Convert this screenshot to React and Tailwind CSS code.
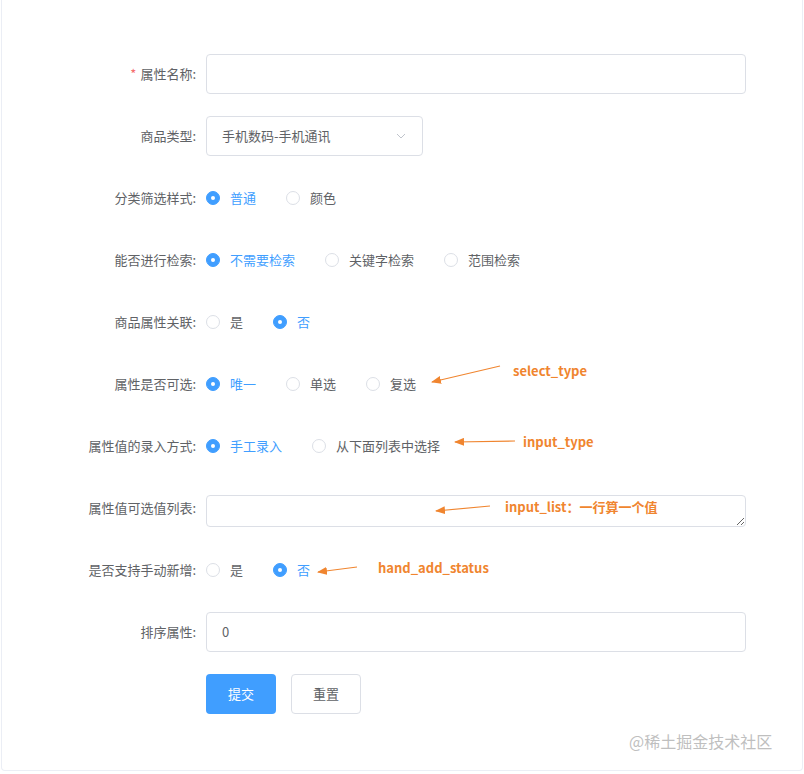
const Radio = ({ label, checked, className = "" }) => (
  <label className={`flex items-center mr-[30px] ${className}`}>
    <span
      className={`w-[14px] h-[14px] rounded-full flex items-center justify-center border ${
        checked ? "bg-[#409eff] border-[#409eff]" : "bg-white border-[#dcdfe6]"
      }`}
    >
      {checked && <span className="w-[4px] h-[4px] rounded-full bg-white" />}
    </span>
    <span className={`ml-[10px] text-[13px] ${checked ? "text-[#409eff]" : "text-[#606266]"}`}>{label}</span>
  </label>
);

const Row = ({ label, required, children }) => (
  <div className="flex h-10 mb-[22px] items-center">
    <div className="w-[204px] pr-[10px] text-right text-[13px] text-[#606266] shrink-0">
      {required && <span className="text-[#f56c6c] mr-[4px]">*</span>}
      {label}
    </div>
    <div className="flex items-center flex-1 pr-[56px]">{children}</div>
  </div>
);

const Radios = ({ items, checked }) => (
  <div className="flex items-center">
    {items.map((t, i) => (
      <Radio key={t} label={t} checked={i === checked} />
    ))}
  </div>
);

export default function App() {
  return (
    <div
      className="relative w-[804px] h-[774px] bg-white"
      style={{ fontFamily: '"Noto Sans CJK SC", "Liberation Sans", sans-serif' }}
    >
      <div className="mx-[1px] h-[771px] border border-t-0 border-[#ebeef5] rounded-b pt-[54px]">
        <Row label="属性名称:" required>
          <div className="w-full h-10 border border-[#dcdfe6] rounded" />
        </Row>
        <Row label="商品类型:">
          <div className="w-[217px] h-10 border border-[#dcdfe6] rounded flex items-center justify-between px-[15px] text-[13px] text-[#606266]">
            <span>手机数码-手机通讯</span>
            <svg width="12" height="12" viewBox="0 0 12 12" fill="none" stroke="#c0c4cc" strokeWidth="1">
              <path d="M2 4l4 4 4-4" />
            </svg>
          </div>
        </Row>
        <Row label="分类筛选样式:">
          <Radios items={["普通", "颜色"]} checked={0} />
        </Row>
        <Row label="能否进行检索:">
          <Radios items={["不需要检索", "关键字检索", "范围检索"]} checked={0} />
        </Row>
        <Row label="商品属性关联:">
          <Radios items={["是", "否"]} checked={1} />
        </Row>
        <Row label="属性是否可选:">
          <Radios items={["唯一", "单选", "复选"]} checked={0} />
        </Row>
        <Row label="属性值的录入方式:">
          <Radios items={["手工录入", "从下面列表中选择"]} checked={0} />
        </Row>
        <Row label="属性值可选值列表:">
          <textarea className="w-full h-[32px] mt-[6px] border border-[#dcdfe6] rounded resize-y outline-none" />
        </Row>
        <Row label="是否支持手动新增:">
          <Radios items={["是", "否"]} checked={1} />
        </Row>
        <Row label="排序属性:">
          <div className="w-full h-10 border border-[#dcdfe6] rounded flex items-center px-[15px] text-[13px] text-[#606266]">
            0
          </div>
        </Row>
        <Row label="">
          <button className="w-[70px] h-10 rounded bg-[#409eff] text-white text-[13px]">提交</button>
          <button className="w-[70px] h-10 ml-[15px] rounded border border-[#dcdfe6] text-[#606266] text-[13px] bg-white">
            重置
          </button>
        </Row>
      </div>

      <svg className="absolute left-0 top-0" width="804" height="774">
        <defs>
          <marker id="ah" markerWidth="10" markerHeight="8" refX="9" refY="4" orient="auto" markerUnits="userSpaceOnUse">
            <path d="M0 0L10 4L0 8z" fill="#f0852f" />
          </marker>
        </defs>
        <g stroke="#f0852f" strokeWidth="1.2" markerEnd="url(#ah)">
          <line x1="500" y1="366" x2="432" y2="382" />
          <line x1="515" y1="441" x2="455" y2="442" />
          <line x1="490" y1="506" x2="436" y2="511" />
          <line x1="357" y1="567" x2="318" y2="572" />
        </g>
      </svg>
      <div className="absolute left-[513px] top-[361px] text-[13px] font-bold text-[#f0852f]">select_type</div>
      <div className="absolute left-[523px] top-[432px] text-[13px] font-bold text-[#f0852f]">input_type</div>
      <div className="absolute left-[505px] top-[497px] text-[13px] font-bold text-[#f0852f]">input_list：一行算一个值</div>
      <div className="absolute left-[378px] top-[558px] text-[13px] font-bold text-[#f0852f]">hand_add_status</div>
      <div className="absolute left-[629px] top-[729px] text-[16px] text-[#bfbfbf]">@稀土掘金技术社区</div>
    </div>
  );
}
